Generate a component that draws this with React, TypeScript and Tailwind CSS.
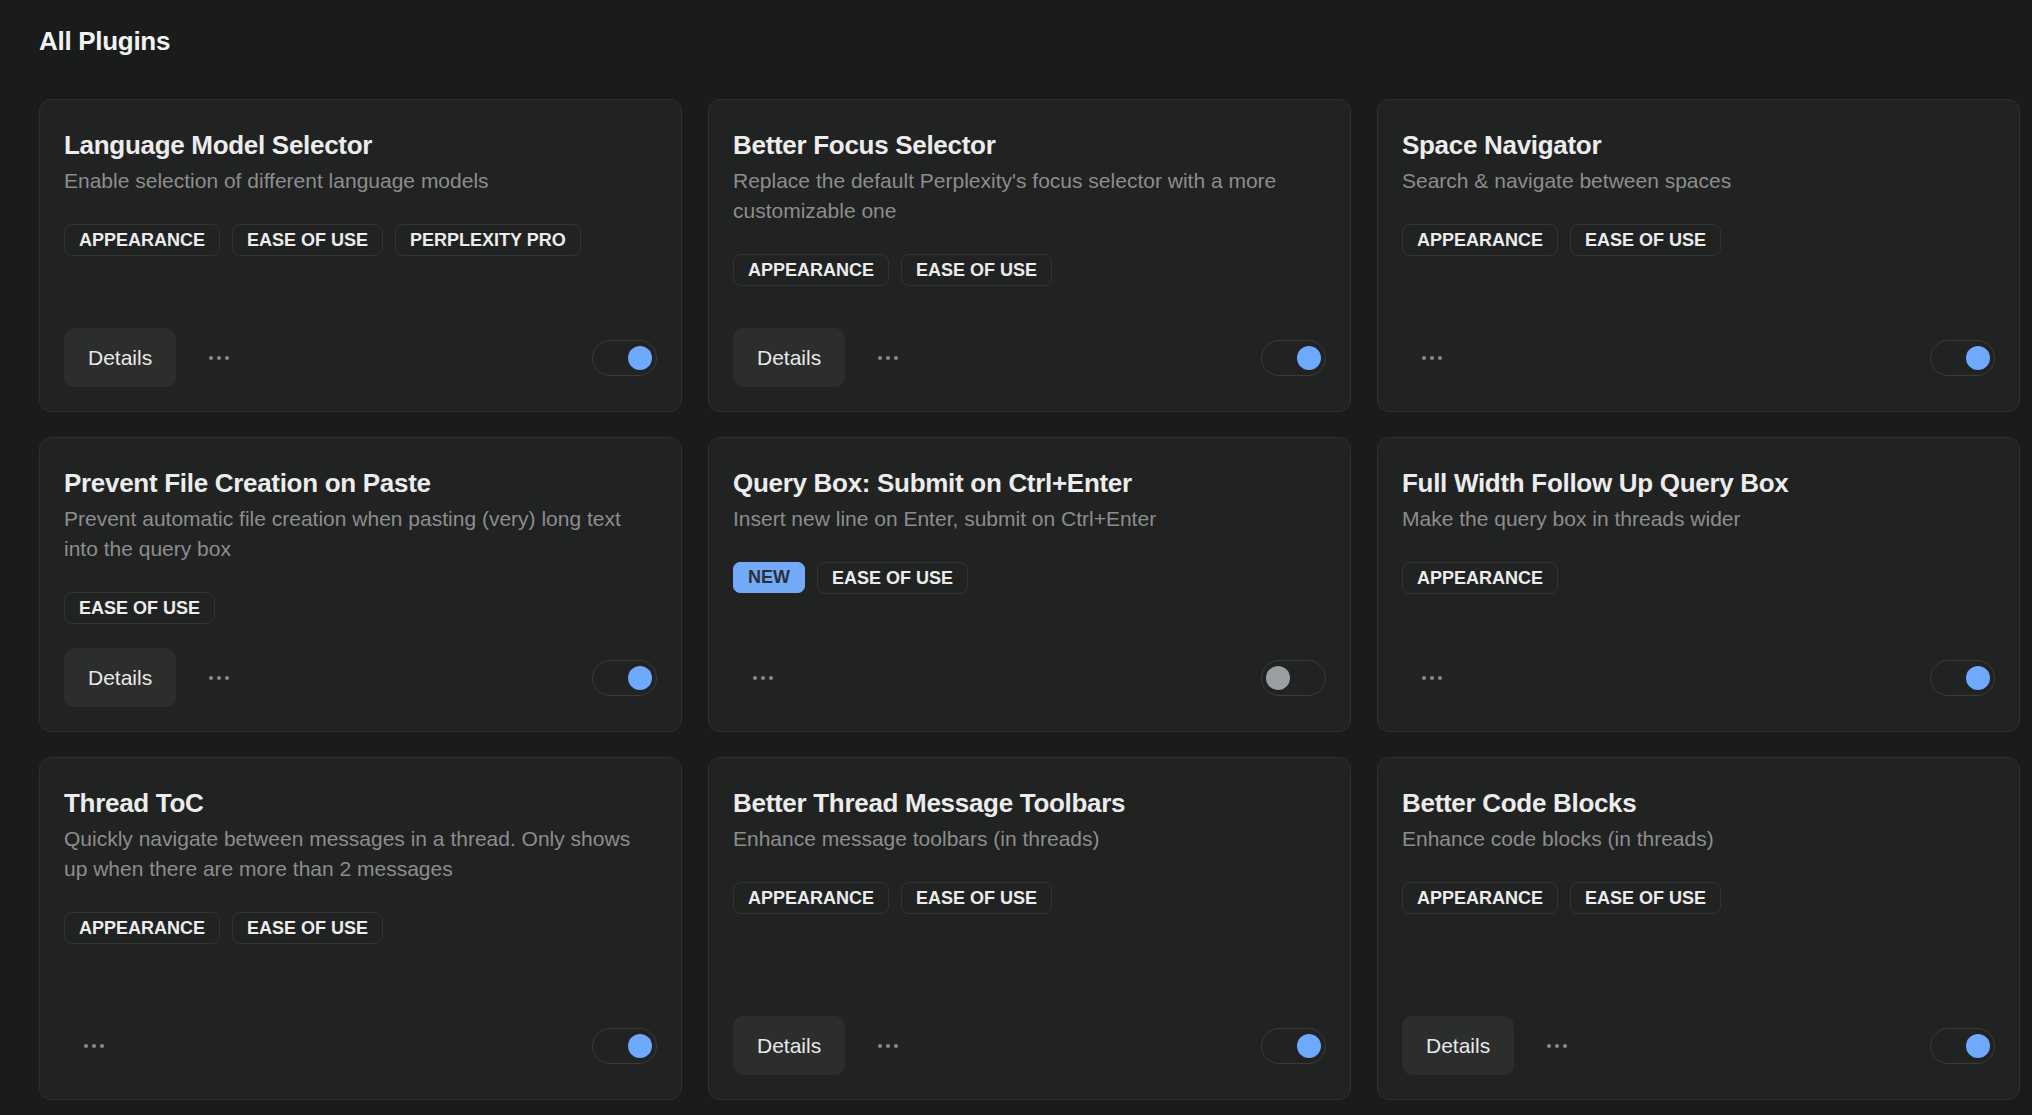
type Plugin = {
  title: string;
  desc: string;
  tags: string[];
  isNew?: boolean;
  details?: boolean;
  on: boolean;
};

const plugins: Plugin[] = [
  {
    title: "Language Model Selector",
    desc: "Enable selection of different language models",
    tags: ["Appearance", "Ease of use", "Perplexity Pro"],
    details: true,
    on: true,
  },
  {
    title: "Better Focus Selector",
    desc: "Replace the default Perplexity's focus selector with a more customizable one",
    tags: ["Appearance", "Ease of use"],
    details: true,
    on: true,
  },
  {
    title: "Space Navigator",
    desc: "Search & navigate between spaces",
    tags: ["Appearance", "Ease of use"],
    on: true,
  },
  {
    title: "Prevent File Creation on Paste",
    desc: "Prevent automatic file creation when pasting (very) long text into the query box",
    tags: ["Ease of use"],
    details: true,
    on: true,
  },
  {
    title: "Query Box: Submit on Ctrl+Enter",
    desc: "Insert new line on Enter, submit on Ctrl+Enter",
    tags: ["Ease of use"],
    isNew: true,
    on: false,
  },
  {
    title: "Full Width Follow Up Query Box",
    desc: "Make the query box in threads wider",
    tags: ["Appearance"],
    on: true,
  },
  {
    title: "Thread ToC",
    desc: "Quickly navigate between messages in a thread. Only shows up when there are more than 2 messages",
    tags: ["Appearance", "Ease of use"],
    on: true,
  },
  {
    title: "Better Thread Message Toolbars",
    desc: "Enhance message toolbars (in threads)",
    tags: ["Appearance", "Ease of use"],
    details: true,
    on: true,
  },
  {
    title: "Better Code Blocks",
    desc: "Enhance code blocks (in threads)",
    tags: ["Appearance", "Ease of use"],
    details: true,
    on: true,
  },
];

function Dots() {
  return (
    <button className="w-[59px] h-[59px] flex items-center justify-center rounded-[10px]">
      <svg width="22" height="6" viewBox="0 0 22 6">
        <circle cx="3" cy="3" r="2" fill="#8a8a8a" />
        <circle cx="11" cy="3" r="2" fill="#8a8a8a" />
        <circle cx="19" cy="3" r="2" fill="#8a8a8a" />
      </svg>
    </button>
  );
}

function Toggle({ on }: { on: boolean }) {
  return (
    <div
      className={
        on
          ? "w-[65px] h-[36px] rounded-full border border-[#3a3b3b] flex items-center justify-end px-[4px]"
          : "w-[65px] h-[36px] rounded-full border border-[#3a3b3b] flex items-center justify-start px-[4px]"
      }
    >
      <div
        className={
          on
            ? "w-[24px] h-[24px] rounded-full bg-[#6fa9fd]"
            : "w-[24px] h-[24px] rounded-full bg-[#9b9ea0]"
        }
      />
    </div>
  );
}

function Card({ p }: { p: Plugin }) {
  return (
    <div className="flex flex-col bg-[#212222] border border-[#2e2f2f] rounded-[12px] px-[24px] pt-[28px] pb-[24px]">
      <h2 className="text-[26px] leading-[35px] font-bold text-[#ececec] tracking-[-0.3px]">{p.title}</h2>
      <p className="mt-[3px] text-[21px] leading-[30px] text-[#8d8d8d] max-w-[582px]">{p.desc}</p>
      <div className="mt-[28px] flex gap-[12px]">
        {p.isNew && (
          <span className="h-[31px] px-[14px] flex items-center rounded-[7px] border border-[#72aaf8] bg-[#72aaf8] text-[#2b3038] text-[18px] font-bold uppercase">
            New
          </span>
        )}
        {p.tags.map((t) => (
          <span
            key={t}
            className="h-[32px] px-[14px] flex items-center rounded-[8px] border border-[#333434] text-[#ececec] text-[18px] font-bold uppercase"
          >
            {t}
          </span>
        ))}
      </div>
      <div className="mt-auto flex items-center">
        {p.details && (
          <button className="h-[59px] px-[24px] mr-[13px] rounded-[10px] bg-[#2c2d2d] text-[#e8e8e8] text-[21px]">
            Details
          </button>
        )}
        <Dots />
        <div className="ml-auto">
          <Toggle on={p.on} />
        </div>
      </div>
    </div>
  );
}

export default function App() {
  return (
    <div className="min-h-screen bg-[#1a1b1b] pl-[39px] pt-[24px] pb-[15px] font-[family-name:Liberation_Sans,Arial,sans-serif]">
      <h1 className="text-[26px] leading-[35px] font-bold text-[#f2f2f2] tracking-[-0.3px]">All Plugins</h1>
      <div className="mt-[40px] grid grid-cols-[repeat(3,643px)] grid-rows-[313px_295px_343px] gap-x-[26px] gap-y-[25px]">
        {plugins.map((p) => (
          <Card key={p.title} p={p} />
        ))}
      </div>
    </div>
  );
}
